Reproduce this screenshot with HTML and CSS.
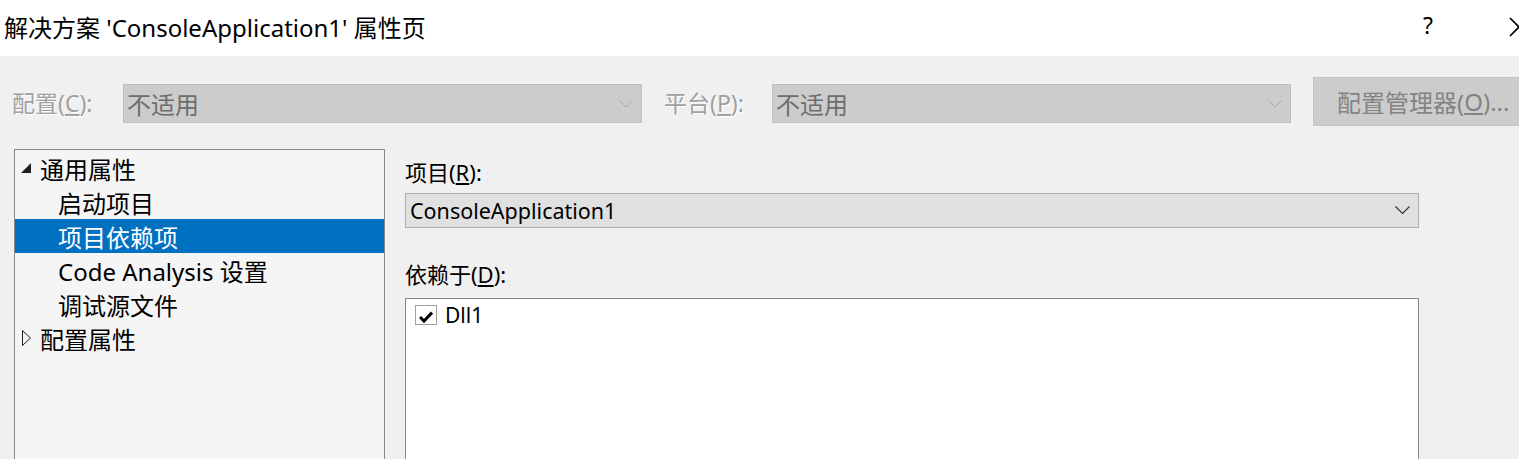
FILE: index.html
```html
<!DOCTYPE html>
<html lang="zh-CN">

<head>
  <meta charset="UTF-8" />
  <title>解决方案 'ConsoleApplication1' 属性页</title>
  <link rel="stylesheet" href="styles.css">
</head>

<body>
  <!-- Title bar -->
  <div class="titlebar">
    <div class="title">解决方案 'ConsoleApplication1' 属性页</div>
    <div class="title-actions">
      <span class="help">?</span>
      <svg class="close" width="20" height="20" viewBox="0 0 20 20">
        <path d="M1 1 L19 19 M19 1 L1 19" stroke="#000" stroke-width="1.6" fill="none" />
      </svg>
    </div>
  </div>

  <!-- Config bar -->
  <div class="toolbar">
    <span class="label label-config">配置(<u>C</u>):</span>
    <div class="select disabled">
      <span>不适用</span>
      <svg width="14" height="8" viewBox="0 0 14 8"><path d="M0.5 0.5 L7 7 L13.5 0.5" stroke="#a8a8a8" fill="none" /></svg>
    </div>
    <span class="label label-platform">平台(<u>P</u>):</span>
    <div class="select disabled">
      <span>不适用</span>
      <svg width="14" height="8" viewBox="0 0 14 8"><path d="M0.5 0.5 L7 7 L13.5 0.5" stroke="#a8a8a8" fill="none" /></svg>
    </div>
    <div class="btn disabled">配置管理器(<u>O</u>)...</div>
  </div>

  <!-- Main -->
  <div class="main">
    <div class="tree">
      <div class="node parent">
        <svg class="arrow" width="11" height="11" viewBox="0 0 11 11"><path d="M10 0 L10 10 L0 10 Z" fill="#1e1e1e" /></svg>
        <span>通用属性</span>
      </div>
      <div class="node child">启动项目</div>
      <div class="node child selected">项目依赖项</div>
      <div class="node child">Code Analysis 设置</div>
      <div class="node child">调试源文件</div>
      <div class="node parent">
        <svg class="arrow" width="11" height="16" viewBox="0 0 11 16"><path d="M1.5 0.5 L9.5 8 L1.5 15.5 Z" fill="none" stroke="#1e1e1e" /></svg>
        <span>配置属性</span>
      </div>
    </div>

    <div class="content">
      <div class="field-label">项目(<u>R</u>):</div>
      <div class="combo">
        <span>ConsoleApplication1</span>
        <svg width="15" height="9" viewBox="0 0 15 9"><path d="M0.5 0.5 L7.5 7.5 L14.5 0.5" stroke="#333" stroke-width="1.2" fill="none" /></svg>
      </div>
      <div class="field-label second">依赖于(<u>D</u>):</div>
      <div class="listbox">
        <div class="item">
          <span class="checkbox">
            <svg width="14" height="12" viewBox="0 0 14 12"><path d="M1 6 L5 10 L13 1.5" stroke="#000" stroke-width="3" fill="none" /></svg>
          </span>
          <span>Dll1</span>
        </div>
      </div>
    </div>
  </div>
</body>

</html>
```

FILE: styles.css
```css
* {
  box-sizing: border-box;
  margin: 0;
  padding: 0;
}

body {
  background-color: #f0f0f0;
  font-family: "Noto Sans", "Noto Sans CJK SC", sans-serif;
  color: #000;
  overflow: hidden;
  height: 459px;
}

/* Title bar */
.titlebar {
  height: 56px;
  background-color: #fff;
  display: flex;
  justify-content: space-between;
  align-items: center;
}

.title {
  padding-left: 4px;
  font-size: 24px;
  padding-bottom: 4px;
  white-space: nowrap;
}

.title-actions {
  display: flex;
  align-items: center;
  margin-right: -10px;
}

.help {
  font-size: 23px;
  margin-right: 76px;
  padding-bottom: 6px;
}

.close {
  margin-bottom: 2px;
}

/* Config bar */
.toolbar {
  height: 93px;
  display: flex;
  align-items: flex-start;
  padding-top: 21px;
  padding-left: 12px;
}

.toolbar > * {
  flex-shrink: 0;
}

.label {
  color: #a0a0a0;
  font-size: 23px;
  line-height: 39px;
  margin-top: 7px;
  text-shadow: 1px 1px 0 #fff;
  white-space: nowrap;
}

.label-config {
  width: 111px;
}

.label-platform {
  width: 108px;
  margin-left: 22px;
}

.select {
  width: 519px;
  height: 39px;
  margin-top: 7px;
  background-color: #cccccc;
  border: 1px solid #bfbfbf;
  display: flex;
  align-items: center;
  justify-content: space-between;
  padding: 0 8px 0 3px;
  font-size: 24px;
  color: #6d6d6d;
}

.btn {
  margin-left: 22px;
  height: 49px;
  width: 230px;
  background-color: #cccccc;
  border: 1px solid #c4c4c4;
  color: #838383;
  font-size: 24px;
  display: flex;
  align-items: center;
  padding-left: 23px;
  white-space: nowrap;
}

/* Main */
.main {
  display: flex;
  align-items: flex-start;
  padding-left: 14px;
}

.tree {
  width: 371px;
  height: 310px;
  background-color: #f5f5f5;
  border: 1px solid #828790;
  border-bottom: none;
  padding-top: 1px;
}

.node {
  height: 34px;
  display: flex;
  align-items: center;
  font-size: 24px;
  white-space: nowrap;
}

.node.parent {
  padding-left: 6px;
}

.node .arrow {
  margin-right: 8px;
}

.node.child {
  padding-left: 43px;
}

.node.selected {
  background-color: #0070c0;
  color: #fff;
}

.content {
  margin-left: 20px;
  width: 1014px;
  padding-top: 6px;
}

.field-label {
  font-size: 22px;
  line-height: 34px;
}

.field-label.second {
  margin-top: 29px;
}

.combo {
  margin-top: 4px;
  height: 35px;
  background-color: #e0e0e0;
  border: 1px solid #adadad;
  display: flex;
  align-items: center;
  justify-content: space-between;
  padding: 0 8px 0 4px;
  font-size: 21.5px;
}

.listbox {
  margin-top: 7px;
  height: 161px;
  background-color: #fff;
  border: 1px solid #828790;
  border-bottom: none;
  padding: 5px 0 0 9px;
}

.item {
  display: flex;
  align-items: center;
  gap: 8px;
  font-size: 21px;
  line-height: 22px;
  height: 22px;
}

.checkbox {
  width: 22px;
  height: 20px;
  border: 1px solid #a0a0a0;
  background-color: #fff;
  display: flex;
  align-items: center;
  justify-content: center;
  padding-top: 3px;
}
```
